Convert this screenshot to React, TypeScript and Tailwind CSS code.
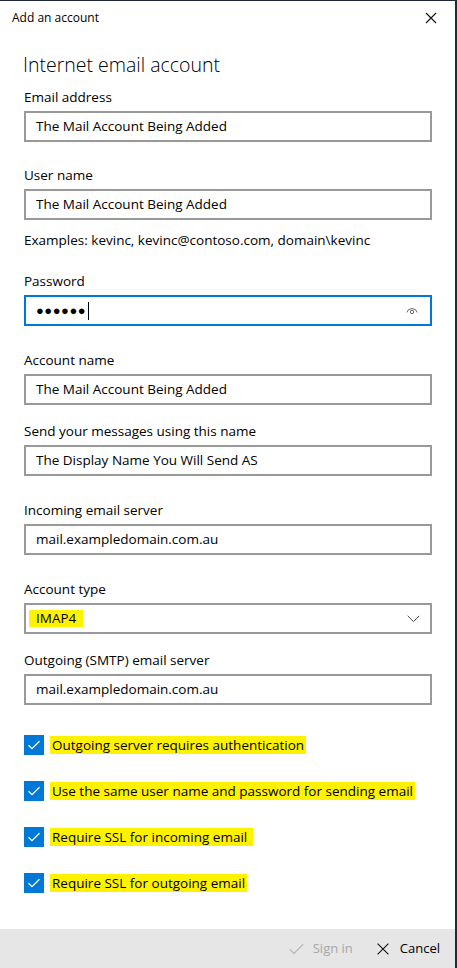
import React from 'react';

const font = { fontFamily: '"Open Sans", "Noto Sans", sans-serif' };

const Label = ({ text, className = '' }: { text: string; className?: string }) => (
  <div className={`h-[20px] leading-[20px] text-[13.5px] text-black ${className}`}>{text}</div>
);

const TextBox = ({ value }: { value: string }) => (
  <div className="mt-1 h-[31px] border-2 border-[#999999] bg-white flex items-center pl-[10px] text-[13.5px] text-black">
    {value}
  </div>
);

const Field = ({ label, value, gap }: { label: string; value: string; gap: string }) => (
  <div className={gap}>
    <Label text={label} />
    <TextBox value={value} />
  </div>
);

const Check = ({ text, className = '', extra = '' }: { text: string; className?: string; extra?: string }) => (
  <div className={`flex items-center h-[20px] ${className}`}>
    <div className="w-[20px] h-[20px] bg-[#0078d7] flex items-center justify-center shrink-0">
      <svg width="14" height="14" viewBox="0 0 14 14" fill="none">
        <path d="M1.5 7.2 L5 10.7 L12.5 3.2" stroke="white" strokeWidth="1.3" />
      </svg>
    </div>
    <span className={`ml-[6px] bg-[#fff200] pl-[2px] h-[18px] leading-[18px] text-[13.5px] text-black ${extra || 'pr-[2px]'}`}>
      {text}
    </span>
  </div>
);

export default function App() {
  return (
    <div
      className="w-[457px] h-[968px] bg-white border-t border-r-2 border-[#1e2a3a] flex flex-col overflow-hidden"
      style={font}
    >
      {/* title bar */}
      <div className="h-[33px] flex items-center justify-between pl-3 pr-[18px]">
        <span className="text-[12px] text-black">Add an account</span>
        <svg width="12" height="12" viewBox="0 0 12 12" fill="none">
          <path d="M1 1 L11 11 M11 1 L1 11" stroke="#111" strokeWidth="1.1" />
        </svg>
      </div>

      <div className="flex-1 pl-6 pr-[23px]">
        <h1 className="mt-[17px] -ml-px h-[28px] leading-[28px] text-[19.5px] font-light text-black">
          Internet email account
        </h1>

        <Field label="Email address" value="The Mail Account Being Added" gap="mt-[8px]" />
        <Field label="User name" value="The Mail Account Being Added" gap="mt-[23px]" />
        <div className="mt-[10px] h-[20px] leading-[20px] text-[13.5px] text-black">
          Examples: kevinc, kevinc@contoso.com, domain\kevinc
        </div>

        <div className="mt-[21px]">
          <Label text="Password" />
          <div className="mt-1 h-[31px] border-2 border-[#0078d7] flex items-center pl-[10px] pr-[12px]">
            <span className="text-[13px] tracking-[0.5px] text-black leading-none">●●●●●●</span>
            <span className="ml-[2px] w-px h-[18px] bg-black" />
            <div className="flex-1" />
            <svg width="12" height="9" viewBox="0 0 12 9" fill="none">
              <path d="M0.8 6.5 A5.4 5.4 0 0 1 11.2 6.5" stroke="#555" strokeWidth="0.9" />
              <circle cx="6" cy="6" r="1.7" stroke="#555" strokeWidth="0.9" />
            </svg>
          </div>
        </div>

        <Field label="Account name" value="The Mail Account Being Added" gap="mt-[24px]" />
        <Field label="Send your messages using this name" value="The Display Name You Will Send AS" gap="mt-[16px]" />
        <Field label="Incoming email server" value="mail.exampledomain.com.au" gap="mt-[24px]" />

        <div className="mt-[24px]">
          <Label text="Account type" />
          <div className="mt-1 h-[31px] border-2 border-[#999999] flex items-center pl-[3px] pr-[10px]">
            <span className="bg-[#fff200] px-[7px] h-[17px] leading-[17px] text-[13.5px] text-black">IMAP4</span>
            <div className="flex-1" />
            <svg width="13" height="8" viewBox="0 0 13 8" fill="none">
              <path d="M0.7 0.8 L6.5 6.6 L12.3 0.8" stroke="#444" strokeWidth="1" />
            </svg>
          </div>
        </div>

        <Field label="Outgoing (SMTP) email server" value="mail.exampledomain.com.au" gap="mt-[16px]" />

        <Check text="Outgoing server requires authentication" className="mt-[30px]" />
        <Check text="Use the same user name and password for sending email" className="mt-[26px]" />
        <Check text="Require SSL for incoming email" className="mt-[26px]" extra="pr-[6px]" />
        <Check text="Require SSL for outgoing email" className="mt-[26px]" />
      </div>

      {/* footer */}
      <div className="h-[39px] bg-[#e6e6e6] flex items-center justify-end pr-[15px] text-[13px]">
        <div className="flex items-center text-[#a6a6a6]">
          <svg width="15" height="12" viewBox="0 0 15 12" fill="none">
            <path d="M0.8 6.3 L5 10.5 L14.2 1.2" stroke="#b3b3b3" strokeWidth="1.1" />
          </svg>
          <span className="ml-[9px]">Sign in</span>
        </div>
        <div className="flex items-center ml-[24px] text-black">
          <svg width="12" height="12" viewBox="0 0 12 12" fill="none">
            <path d="M0.6 0.6 L11.4 11.4 M11.4 0.6 L0.6 11.4" stroke="#111" strokeWidth="1.1" />
          </svg>
          <span className="ml-[11px]">Cancel</span>
        </div>
      </div>
    </div>
  );
}
